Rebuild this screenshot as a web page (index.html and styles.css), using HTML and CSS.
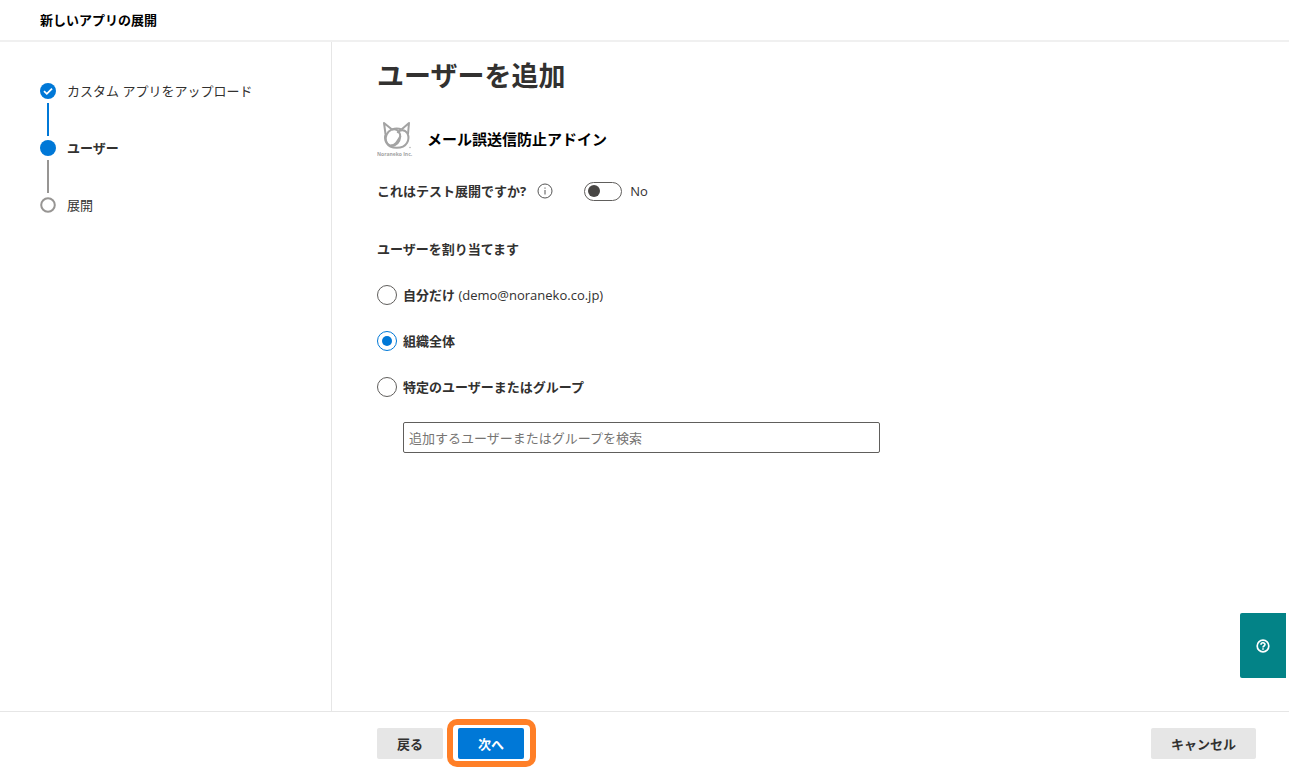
FILE: index.html
```
<!DOCTYPE html>
<html lang="ja">
<head>
    <meta charset="UTF-8">
    <meta name="viewport" content="width=device-width, initial-scale=1.0">
    <title>新しいアプリの展開</title>
    <link rel="stylesheet" href="styles.css">
</head>
<body>
    <header class="header">新しいアプリの展開</header>

    <div class="container">
        <nav class="sidebar">
            <ol class="steps">
                <li class="step done">
                    <span class="marker">
                        <svg viewBox="0 0 16 16" width="16" height="16" aria-hidden="true">
                            <circle cx="8" cy="8" r="8" fill="#0078d7"/>
                            <path d="M4 8.2 L6.8 10.8 L12 5.6" fill="none" stroke="#fff" stroke-width="1.8"/>
                        </svg>
                    </span>
                    <span>カスタム アプリをアップロード</span>
                </li>
                <li class="step current" aria-current="step">
                    <span class="marker">
                        <svg viewBox="0 0 16 16" width="16" height="16" aria-hidden="true">
                            <circle cx="8" cy="8" r="8" fill="#0078d7"/>
                        </svg>
                    </span>
                    <span>ユーザー</span>
                </li>
                <li class="step">
                    <span class="marker">
                        <svg viewBox="0 0 16 16" width="16" height="16" aria-hidden="true">
                            <circle cx="8" cy="8" r="6.8" fill="#fff" stroke="#979593" stroke-width="2"/>
                        </svg>
                    </span>
                    <span>展開</span>
                </li>
            </ol>
        </nav>

        <main class="content">
            <h1>ユーザーを追加</h1>

            <div class="app">
                <svg class="app-logo" viewBox="0 0 40 40" width="40" height="40" role="img" aria-label="Noraneko Inc.">
                    <g fill="none" stroke="#a3a3a3" stroke-width="2" stroke-linejoin="round">
                        <path d="M8.5 15 L7 4 L15 10.5"/>
                        <path d="M24.5 10.5 L32 4 L31 15"/>
                        <path d="M15 10.5 Q19.7 8.5 24.5 10.5"/>
                        <path d="M9 14.5 C6.5 20 9 28.8 19.7 28.8 C30.5 28.8 33 20 30.5 14.5"/>
                        <ellipse cx="16" cy="18.5" rx="7" ry="8.5" transform="rotate(25 16 18.5)"/>
                        <path d="M30.5 14.5 C28 10.5 23 10 20.5 14"/>
                        <path d="M14 26.5 C18 26.5 20 23 23.5 17"/>
                    </g>
                    <circle cx="33" cy="28.5" r="0.7" fill="#a3a3a3"/>
                    <text x="0" y="37" class="logo-text">Noraneko Inc.</text>
                </svg>
                <h2>メール誤送信防止アドイン</h2>
            </div>

            <div class="test-row">
                <label for="test">これはテスト展開ですか?</label>
                <button type="button" class="info" aria-label="情報">
                    <svg viewBox="0 0 16 16" width="16" height="16" aria-hidden="true">
                        <circle cx="8" cy="8" r="7" fill="none" stroke="#555" stroke-width="1"/>
                        <path d="M8 7 V11.5 M8 4.5 V5.7" stroke="#555" stroke-width="1"/>
                    </svg>
                </button>
                <input type="checkbox" role="switch" id="test" class="toggle">
                <span>No</span>
            </div>

            <fieldset class="users">
                <legend>ユーザーを割り当てます</legend>
                <label class="option">
                    <input type="radio" name="users" value="me">
                    <span><b>自分だけ</b> (demo@noraneko.co.jp)</span>
                </label>
                <label class="option">
                    <input type="radio" name="users" value="all" checked>
                    <b>組織全体</b>
                </label>
                <label class="option">
                    <input type="radio" name="users" value="group">
                    <b>特定のユーザーまたはグループ</b>
                </label>
                <input type="text" class="search" placeholder="追加するユーザーまたはグループを検索" aria-label="追加するユーザーまたはグループを検索">
            </fieldset>
        </main>
    </div>

    <footer class="footer">
        <button type="button" class="btn">戻る</button>
        <button type="button" class="btn primary">次へ</button>
        <button type="button" class="btn cancel">キャンセル</button>
    </footer>

    <button type="button" class="help" aria-label="ヘルプ">
        <svg viewBox="0 0 14 14" width="14" height="14" aria-hidden="true">
            <circle cx="7" cy="7" r="5.8" fill="none" stroke="#fff" stroke-width="1.7"/>
            <path d="M5 5.8 C5 3.2 9 3.2 9 5.6 C9 7 7 7 7 8.5 M7 9.3 V10.8" fill="none" stroke="#fff" stroke-width="1.6"/>
        </svg>
    </button>
</body>
</html>
```

FILE: styles.css
```
* {
    box-sizing: border-box;
}

body {
    margin: 0;
    min-height: 100vh;
    display: flex;
    flex-direction: column;
    font-family: "Open Sans", "Noto Sans CJK JP", sans-serif;
    font-size: 13px;
    line-height: 20px;
    color: #323130;
    background-color: #fff;
}

button,
input {
    font-family: inherit;
    font-size: inherit;
    color: inherit;
}

h1,
h2 {
    margin: 0;
}

.header {
    padding: 10px 40px;
    border-bottom: 2px solid #f0f0f0;
    font-weight: bold;
    color: #000;
}

.container {
    flex: 1;
    display: flex;
}

.sidebar {
    width: 332px;
    padding: 39px 40px;
    border-right: 1px solid #e6e6e6;
}

.steps {
    margin: 0;
    padding: 0;
    list-style: none;
}

.step {
    display: flex;
    gap: 11px;
    height: 57px;
}

.current {
    font-weight: bold;
}

.marker {
    display: flex;
    flex-direction: column;
    align-items: center;
    padding-top: 2px;
}

.marker svg {
    flex: none;
}

/* 次のステップへの線 */
.step:not(:last-child) .marker::after {
    content: "";
    flex: 1;
    width: 2px;
    margin: 4px 0 2px;
    background-color: #979593;
}

.step.done .marker::after {
    background-color: #0078d7;
}

.content {
    flex: 1;
    padding: 14px 45px;
}

h1 {
    font-size: 27px;
    line-height: 40px;
}

.app {
    display: flex;
    align-items: center;
    gap: 10px;
    margin-top: 23px;
}

.app h2 {
    font-size: 15px;
    color: #000;
}

.logo-text {
    font-size: 5px;
    font-weight: bold;
    fill: #a3a3a3;
}

.test-row {
    display: flex;
    align-items: center;
    margin-top: 22px;
}

.test-row label {
    font-weight: bold;
}

.info {
    display: flex;
    margin: 0 31px 0 11px;
    padding: 0;
    border: none;
    background: none;
}

.toggle {
    appearance: none;
    display: flex;
    align-items: center;
    width: 38px;
    height: 19px;
    margin: 0 8px 0 0;
    padding: 0 3px;
    border: 1px solid #605e5c;
    border-radius: 10px;
}

.toggle::before {
    content: "";
    width: 12px;
    height: 12px;
    border-radius: 50%;
    background-color: #484644;
}

.toggle:checked {
    justify-content: flex-end;
}

.users {
    margin: 38px 0 0;
    padding: 0;
    border: none;
}

.users legend {
    padding: 0;
    font-weight: bold;
}

.option {
    display: flex;
    align-items: center;
    gap: 6px;
    margin-top: 26px;
}

.option input {
    appearance: none;
    display: grid;
    place-content: center;
    width: 20px;
    height: 20px;
    margin: 0;
    border: 1px solid #605e5c;
    border-radius: 50%;
}

.option input:checked {
    border-color: #0078d7;
}

.option input:checked::before {
    content: "";
    width: 10px;
    height: 10px;
    border-radius: 50%;
    background-color: #0078d7;
}

.search {
    display: block;
    width: 100%;
    max-width: 477px;
    height: 31px;
    margin: 25px 0 0 26px;
    padding: 0 5px;
    border: 1px solid #605e5c;
    border-radius: 2px;
}

.search::placeholder {
    color: #767472;
}

.footer {
    display: flex;
    gap: 15px;
    padding: 16px 33px 9px 377px;
    border-top: 1px solid #e6e6e6;
}

.btn {
    min-width: 65px;
    height: 31px;
    padding: 0 20px;
    border: none;
    border-radius: 2px;
    background-color: #e6e6e6;
    font-weight: bold;
}

.primary {
    position: relative;
    background-color: #0078d7;
    color: #fff;
}

.primary::after {
    content: "";
    position: absolute;
    inset: -9px -12px -8px -11px;
    border: 6px solid #ff7f27;
    border-radius: 10px;
}

.cancel {
    margin-left: auto;
}

.help {
    position: fixed;
    right: 3px;
    bottom: 90px;
    display: flex;
    align-items: center;
    justify-content: center;
    width: 46px;
    height: 65px;
    padding: 0;
    border: none;
    border-radius: 2px 0 0 2px;
    background-color: #038387;
}
```
